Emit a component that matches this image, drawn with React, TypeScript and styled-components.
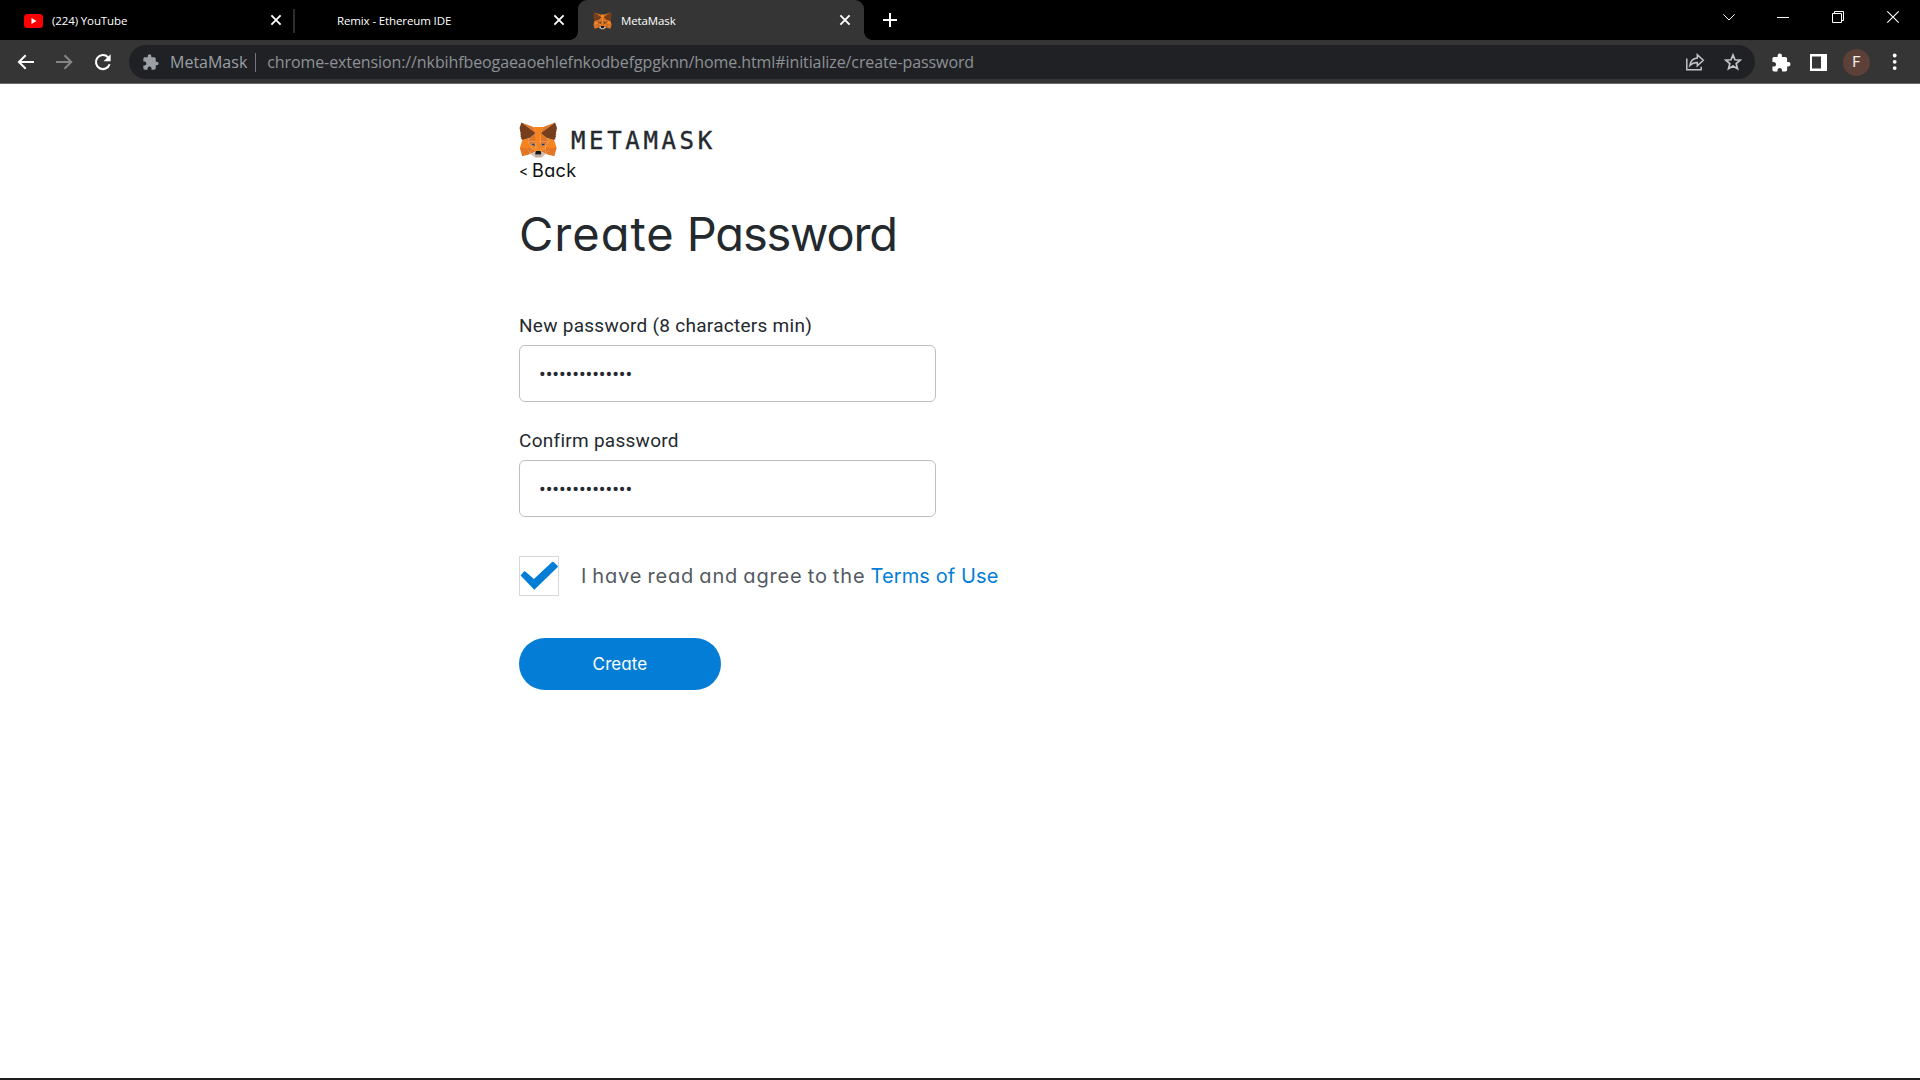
import React from "react";
import styled, { createGlobalStyle } from "styled-components";

const GlobalStyle = createGlobalStyle`
  * { box-sizing: border-box; }
  body { margin: 0; background: #fff; overflow: hidden; }
`;

const UI_FONT = `"Segoe UI", "Open Sans", "Noto Sans", sans-serif`;
const PAGE_FONT = `"Euclid Circular B", Inter, Roboto, sans-serif`;

const Window = styled.div`
  display: flex;
  flex-direction: column;
  width: 1920px;
  height: 1080px;
  background: #fff;
`;

/* ---------- tab strip ---------- */

const TabStrip = styled.header`
  display: flex;
  height: 40px;
  background: #000;
  color: #fff;
  font-family: ${UI_FONT};
`;

const Tab = styled.div<{ $width: number; $active?: boolean }>`
  position: relative;
  display: flex;
  align-items: center;
  width: ${(p) => p.$width}px;
  height: 40px;
  padding: 0 13px 0 15px;
  border-radius: 9px 9px 0 0;
  background: ${(p) => (p.$active ? "#353535" : "transparent")};
  ${(p) =>
    p.$active &&
    `
    &::before, &::after {
      content: "";
      position: absolute;
      bottom: 0;
      width: 8px;
      height: 8px;
    }
    &::before { left: -8px; background: radial-gradient(circle at 0 0, transparent 7.5px, #353535 8px); }
    &::after { right: -8px; background: radial-gradient(circle at 100% 0, transparent 7.5px, #353535 8px); }
  `}
`;

const TabIcon = styled.span`
  display: flex;
  width: 19px;
  margin: 1px 9px 0 0;
`;

const TabTitle = styled.span`
  flex: 1;
  padding-top: 1px;
  font-size: 11.5px;
  letter-spacing: -0.12px;
  line-height: 16px;
  white-space: nowrap;
`;

const TabDivider = styled.div`
  width: 2px;
  height: 24px;
  margin: 9px -1px 0 -2px;
  background: #2d2d2d;
`;

const StripStart = styled.div`
  width: 9px;
`;

const NewTab = styled.div`
  display: flex;
  width: 52px;
  align-items: center;
  justify-content: center;
`;

const WindowControls = styled.div`
  display: flex;
  align-items: flex-start;
  gap: 41px;
  margin-left: auto;
  padding: 10px 20px 0 0;
`;

/* ---------- toolbar ---------- */

const Toolbar = styled.nav`
  display: flex;
  align-items: center;
  height: 44px;
  padding: 1px 21px 0 15px;
  background: #353535;
  border-bottom: 1px solid #6b6b6b;
`;

const NavButtons = styled.div`
  display: flex;
  gap: 16px;
  width: 114px;
`;

const Omnibox = styled.div`
  display: flex;
  align-items: center;
  width: 1626px;
  height: 34px;
  padding: 0 12px 0 14px;
  border-radius: 17px;
  background: #202124;
  font-family: ${UI_FONT};
  font-size: 16px;
  line-height: 20px;
  white-space: nowrap;
`;

const SiteName = styled.span`
  margin-left: 11px;
  color: #9aa0a6;
`;

const OmniDivider = styled.span`
  width: 1px;
  height: 19px;
  margin: 0 11px 0 8px;
  background: #74777b;
`;

const Address = styled.span`
  flex: 1;
  color: #8d9196;
  letter-spacing: -0.1px;
`;

const OmniActions = styled.div`
  display: flex;
  gap: 18px;
`;

const ToolbarActions = styled.div`
  display: flex;
  align-items: center;
  margin-left: auto;
`;

const PanelSlot = styled.span`
  display: flex;
  margin: 0 16px 0 19px;
`;

const Avatar = styled.div`
  width: 27px;
  height: 27px;
  margin-right: 21px;
  border-radius: 50%;
  background: #5d4037;
  color: #f1edeb;
  font: 400 15px/27px Roboto, sans-serif;
  text-align: center;
`;

/* ---------- page ---------- */

const Page = styled.main`
  flex: 1;
  padding: 37px 0 0 519px;
  color: #24292e;
  font-family: ${PAGE_FONT};
  font-feature-settings: "cv11" 1;
`;

const Brand = styled.div`
  display: flex;
  height: 37px;
  align-items: flex-start;
`;

const LogoMark = styled.span`
  display: flex;
  padding-top: 0.5px;
`;

const Wordmark = styled.span`
  margin: 6px 0 0 13.5px;
  font: 400 24px/28px "DejaVu Sans Mono", monospace;
  letter-spacing: 3.65px;
  -webkit-text-stroke: 0.4px #24292e;
`;

const BackLink = styled.a`
  display: flex;
  align-items: center;
  height: 24px;
  color: #111;
  font-size: 18px;
  letter-spacing: 0.4px;
`;

const BackArrow = styled.span`
  width: 13px;
  font-size: 14px;
`;

const Title = styled.h1`
  display: flex;
  gap: 12px;
  margin: 22px 0 0;
  font-size: 47px;
  font-weight: 400;
  line-height: 60px;
`;

const TitleWord = styled.span<{ $tracking: number }>`
  letter-spacing: ${(p) => p.$tracking}px;
`;

const Form = styled.form`
  display: flex;
  flex-direction: column;
  align-items: flex-start;
  padding-top: 50px;
`;

const Label = styled.label`
  height: 31px;
  font: 400 19px/24px Roboto, sans-serif;
  letter-spacing: 0.27px;
`;

const PasswordField = styled.div`
  width: 417px;
  height: 57px;
  margin-bottom: 27px;
  padding-left: 19px;
  border: 1px solid #bbc0c5;
  border-radius: 6px;
  font: 400 20px/56px Roboto, sans-serif;
  letter-spacing: -0.1px;
`;

const TermsRow = styled.div`
  display: flex;
  align-items: center;
  margin-top: 12px;
  color: #535a61;
  font-size: 20px;
  line-height: 24px;
`;

const Checkbox = styled.span`
  display: flex;
  width: 40px;
  height: 40px;
  margin-right: 22px;
  border: 1px solid #d6d9dc;
`;

const TermsText = styled.span`
  letter-spacing: 0.86px;
  word-spacing: -1.4px;
  white-space: pre;
`;

const TermsLink = styled.a`
  color: #037dd6;
  letter-spacing: 0.1px;
`;

const CreateButton = styled.button`
  width: 202px;
  height: 52px;
  margin-top: 42px;
  padding: 0;
  border: 0;
  border-radius: 26px;
  background: #037dd6;
  color: #fff;
  font-family: inherit;
  font-feature-settings: inherit;
  font-size: 17px;
  letter-spacing: 0.1px;
`;

const Taskbar = styled.footer`
  height: 2px;
  background: #1d1d1f;
`;

const Fox = ({ width, height }: { width: number; height: number }) => (
  <svg width={width} height={height} viewBox="0.5 0.6 34.6 32.8" preserveAspectRatio="none">
    <path fill="#E17726" d="m32.96 1-13.14 9.72 2.45-5.73L32.96 1z" />
    <path fill="#E27625" d="m2.66 1 13.02 9.81-2.33-5.82L2.66 1zm25.57 22.53-3.5 5.34 7.49 2.06 2.14-7.28-6.13-.12zm-26.96.12 2.13 7.28 7.47-2.06-3.48-5.34-6.12.12z" />
    <path fill="#E27625" d="m10.47 14.51-2.08 3.14 7.4.34-.24-7.97-5.08 4.49zm14.68 0-5.16-4.58-.17 8.06 7.4-.34-2.07-3.14zM10.87 28.87l4.49-2.16-3.86-3.01-.63 5.17zm9.39-2.16 4.46 2.16-.6-5.17-3.86 3.01z" />
    <path fill="#D5BFB2" d="m24.72 28.87-4.46-2.16.36 2.9-.04 1.23 4.14-1.97zm-13.85 0 4.16 1.97-.03-1.23.36-2.9-4.49 2.16z" />
    <path fill="#F5841F" d="m32.06 16.52-6.91-2.01 2.07 3.14-3.11 6.05 4.12-.05h6.13l-2.3-7.13zm-21.59-2.01-6.91 2.01-2.29 7.13h6.12l4.1.05-3.11-6.05 2.09-3.14zm9.35 3.48.45-7.6 2-5.4h-8.92l2 5.4.45 7.6.17 2.38.01 5.9h3.66l.02-5.9.16-2.38z" />
    <path fill="#F5841F" d="m20.52 21.78-.88 4.49.62.44 3.86-3.01.13-3.01-3.73 1.09zm-9.14-1.09.11 3.01 3.87 3.01.62-.44-.87-4.49-3.73-1.09z" />
    <path fill="#DD7426" d="m10.87 28.87.65-5.34-4.13.12 3.48 5.22zm13.23-5.34.62 5.34 3.5-5.22-4.12-.12zM27.23 17.65l-7.4.34.69 3.79 1.09-2.29 2.64 1.2 2.98-3.04zM11.38 20.69l2.63-1.2 1.09 2.29.69-3.79-7.4-.34 2.99 3.04z" />
    <path fill="#E27525" d="m8.39 17.65 3.11 6.05-.11-3.01-3-3.04zm15.86 3.04-.13 3.01 3.11-6.05-2.98 3.04zM15.79 17.99l-.69 3.79.87 4.49.2-5.91-.38-2.37zm4.03 0-.36 2.36.18 5.92.88-4.49-.7-3.79z" />
    <path fill="#233447" d="m15.1 21.78-3.72-1.09 2.63-1.2 1.09 2.29zm5.42 0 1.09-2.29 2.64 1.2-3.73 1.09z" />
    <path fill="#C0AC9D" d="m20.58 30.84.04-1.23-.34-.28h-4.95l-.31.28.03 1.23-4.16-1.97 1.46 1.19 2.95 2.03h5.04l2.96-2.03 1.42-1.19-4.14 1.97z" />
    <path fill="#161616" d="m20.26 26.71-.62-.44h-3.66l-.62.44-.36 2.9.31-.28h4.95l.34.28-.34-2.9z" />
    <path fill="#763E1A" d="m33.52 11.35 1.1-5.36L32.96 1l-12.7 9.39 4.89 4.12 6.91 2.01 1.53-1.77-.66-.48 1.05-.96-.81-.62 1.05-.8-.7-.54zM1 5.99l1.12 5.36-.72.53 1.07.8-.8.62 1.05.96-.66.48 1.52 1.77 6.91-2.01 4.89-4.12L2.66 1 1 5.99z" />
  </svg>
);

const YouTube = () => (
  <svg width="19" height="14" viewBox="0 0 19 14">
    <rect width="19" height="14" rx="3.5" fill="#f00" />
    <path d="M7.5 4v6l5-3z" fill="#fff" />
  </svg>
);

const Close = () => (
  <svg width="12" height="12" viewBox="0 0 12 12" stroke="#fff" strokeWidth="1.9">
    <path d="M1.4 1.4l9.2 9.2M10.6 1.4l-9.2 9.2" />
  </svg>
);

const PUZZLE =
  "M20.5 11H19V7c0-1.1-.9-2-2-2h-4V3.5a2.5 2.5 0 0 0-5 0V5H4c-1.1 0-2 .9-2 2v3.8h1.5c1.5 0 2.7 1.2 2.7 2.7S5 16.2 3.5 16.2H2V20c0 1.1.9 2 2 2h3.8v-1.5c0-1.5 1.2-2.7 2.7-2.7s2.7 1.2 2.7 2.7V22H17c1.1 0 2-.9 2-2v-4h1.5a2.5 2.5 0 0 0 0-5z";

const Puzzle = ({ size, color }: { size: number; color: string }) => (
  <svg width={size} height={size} viewBox="1.5 0.5 22 22" fill={color}>
    <path d={PUZZLE} />
  </svg>
);

const Arrow = ({ color, flip }: { color: string; flip?: boolean }) => (
  <svg width="22" height="20" viewBox="0 0 22 20" fill="none" stroke={color} strokeWidth="2">
    <path d={flip ? "M3 10h15M11.5 3.2l6.8 6.8-6.8 6.8" : "M19 10H4M10.7 3.2L3.9 10l6.8 6.8"} />
  </svg>
);

const Reload = () => (
  <svg width="22" height="20" viewBox="-1 0 22 20">
    <path d="M17.6 12.2A7 7 0 1 1 16 5.2" fill="none" stroke="#fff" strokeWidth="2.1" />
    <path d="M18.6 2.2v7h-7z" fill="#fff" />
  </svg>
);

const DOTS = "•".repeat(14);

export default function App() {
  return (
    <Window>
      <GlobalStyle />
      <TabStrip>
        <StripStart />
        <Tab $width={286}>
          <TabIcon><YouTube /></TabIcon>
          <TabTitle>(224) YouTube</TabTitle>
          <Close />
        </Tab>
        <TabDivider />
        <Tab $width={284}>
          <TabIcon />
          <TabTitle>Remix - Ethereum IDE</TabTitle>
          <Close />
        </Tab>
        <Tab $width={286} $active>
          <TabIcon><Fox width={19} height={18} /></TabIcon>
          <TabTitle>MetaMask</TabTitle>
          <Close />
        </Tab>
        <NewTab>
          <svg width="14" height="14" viewBox="0 0 14 14" stroke="#fff" strokeWidth="2">
            <path d="M7 0v14M0 7h14" />
          </svg>
        </NewTab>
        <WindowControls>
          <svg width="14" height="14" viewBox="-2 0 14 14" fill="none" stroke="#fff">
            <path d="M0.3 4.3L6 10l5.7-5.7" />
          </svg>
          <svg width="14" height="14" viewBox="0 0 14 14" stroke="#fff">
            <path d="M1 7.5h12" />
          </svg>
          <svg width="14" height="14" viewBox="0 0 14 14" fill="none" stroke="#fff">
            <path d="M1.5 3.5h9v9h-9zM3.5 3.500v-2h9v9h-2" />
          </svg>
          <svg width="14" height="14" viewBox="0 0 14 14" stroke="#fff" strokeWidth="1.1">
            <path d="M1.3 1.3l11.4 11.4M12.7 1.3L1.3 12.7" />
          </svg>
        </WindowControls>
      </TabStrip>

      <Toolbar>
        <NavButtons>
          <Arrow color="#fff" />
          <Arrow color="#858585" flip />
          <Reload />
        </NavButtons>
        <Omnibox>
          <Puzzle size={16} color="#9aa0a6" />
          <SiteName>MetaMask</SiteName>
          <OmniDivider />
          <Address>chrome-extension://nkbihfbeogaeaoehlefnkodbefgpgknn/home.html#initialize/create-password</Address>
          <OmniActions>
            <svg width="20" height="20" viewBox="0 0 20 20" fill="none" stroke="#c3c4c6" strokeWidth="1.5">
              <path d="M1.8 6.5v11.2h14.4v-3" />
              <path d="M12.3 2.8v3.3C8 6.5 5.5 9 4.8 13.6c2.2-2.3 4.5-3.1 7.5-3.1v3.3l6-5.500z" />
            </svg>
            <svg width="20" height="20" viewBox="0 0 20 20" fill="none" stroke="#c3c4c6" strokeWidth="1.7">
              <path d="M10 3l2 4.800 5.200.4-4 3.400 1.300 5.100L10 14l-4.500 2.700 1.300-5.100-4-3.400 5.200-.4z" />
            </svg>
          </OmniActions>
        </Omnibox>
        <ToolbarActions>
          <Puzzle size={19} color="#fff" />
          <PanelSlot>
            <svg width="17" height="17" viewBox="0 0 17 17">
              <path d="M0 0h17v17H0z" fill="#fff" />
              <path d="M2 2.5h9v12H2z" fill="#353535" />
            </svg>
          </PanelSlot>
          <Avatar>F</Avatar>
          <svg width="8" height="18" viewBox="0 0 8 18" fill="#fff">
            <circle cx="3.7" cy="2.5" r="1.9" />
            <circle cx="3.7" cy="8.8" r="1.9" />
            <circle cx="3.7" cy="15.1" r="1.9" />
          </svg>
        </ToolbarActions>
      </Toolbar>

      <Page>
        <Brand>
          <LogoMark>
            <Fox width={38.5} height={37} />
          </LogoMark>
          <Wordmark>METAMASK</Wordmark>
        </Brand>
        <BackLink>
          <BackArrow>&lt;</BackArrow>
          Back
        </BackLink>
        <Title>
          <TitleWord $tracking={1}>Create</TitleWord>
          <TitleWord $tracking={-1.2}>Password</TitleWord>
        </Title>
        <Form>
          <Label>New password (8 characters min)</Label>
          <PasswordField>{DOTS}</PasswordField>
          <Label>Confirm password</Label>
          <PasswordField>{DOTS}</PasswordField>
          <TermsRow>
            <Checkbox>
              <svg width="39" height="38" viewBox="0 0 39 38" fill="#037dd6">
                <path d="M0.6 18.4L4 14.4q.7-.7 1.500 0L14.300 22 32.900 4.700q.8-.7 1.600 0l4 3.900q.7.7 0 1.400L14.700 33.200z" />
              </svg>
            </Checkbox>
            <TermsText>I have read and agree to the </TermsText>
            <TermsLink>Terms of Use</TermsLink>
          </TermsRow>
          <CreateButton type="button">Create</CreateButton>
        </Form>
      </Page>
      <Taskbar />
    </Window>
  );
}
